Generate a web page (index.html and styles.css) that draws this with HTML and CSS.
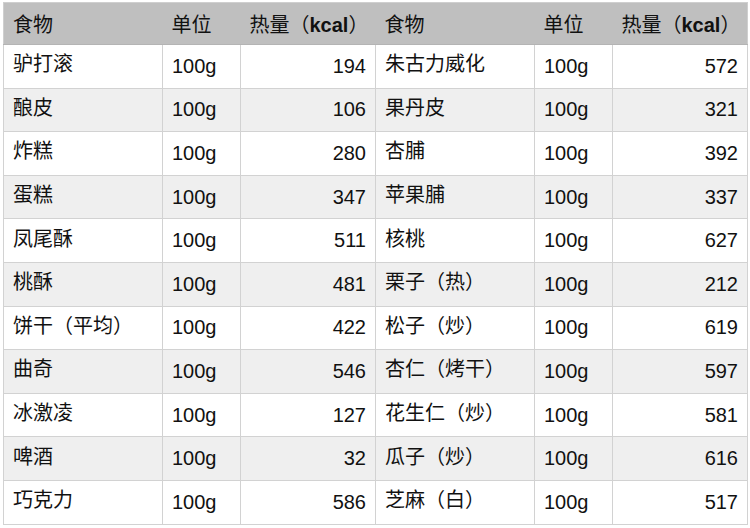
FILE: index.html
```html
<!DOCTYPE html>
<html lang="zh-CN">
<head>
<meta charset="utf-8">
<title>热量表</title>
<link rel="stylesheet" href="styles.css">
</head>
<body>
<table class="cal">
  <colgroup>
    <col class="c-food"><col class="c-unit"><col class="c-kcal">
    <col class="c-food"><col class="c-unit"><col class="c-kcal">
  </colgroup>
  <thead>
    <tr>
      <th>食物</th><th>单位</th><th>热量（<b>kcal</b>）</th>
      <th>食物</th><th>单位</th><th>热量（<b>kcal</b>）</th>
    </tr>
  </thead>
  <tbody>
    <tr><td class="food">驴打滚</td><td>100g</td><td class="num">194</td><td class="food">朱古力威化</td><td>100g</td><td class="num">572</td></tr>
    <tr><td class="food">酿皮</td><td>100g</td><td class="num">106</td><td class="food">果丹皮</td><td>100g</td><td class="num">321</td></tr>
    <tr><td class="food">炸糕</td><td>100g</td><td class="num">280</td><td class="food">杏脯</td><td>100g</td><td class="num">392</td></tr>
    <tr><td class="food">蛋糕</td><td>100g</td><td class="num">347</td><td class="food">苹果脯</td><td>100g</td><td class="num">337</td></tr>
    <tr><td class="food">凤尾酥</td><td>100g</td><td class="num">511</td><td class="food">核桃</td><td>100g</td><td class="num">627</td></tr>
    <tr><td class="food">桃酥</td><td>100g</td><td class="num">481</td><td class="food">栗子（热）</td><td>100g</td><td class="num">212</td></tr>
    <tr><td class="food">饼干（平均）</td><td>100g</td><td class="num">422</td><td class="food">松子（炒）</td><td>100g</td><td class="num">619</td></tr>
    <tr><td class="food">曲奇</td><td>100g</td><td class="num">546</td><td class="food">杏仁（烤干）</td><td>100g</td><td class="num">597</td></tr>
    <tr><td class="food">冰激凌</td><td>100g</td><td class="num">127</td><td class="food">花生仁（炒）</td><td>100g</td><td class="num">581</td></tr>
    <tr><td class="food">啤酒</td><td>100g</td><td class="num">32</td><td class="food">瓜子（炒）</td><td>100g</td><td class="num">616</td></tr>
    <tr><td class="food">巧克力</td><td>100g</td><td class="num">586</td><td class="food">芝麻（白）</td><td>100g</td><td class="num">517</td></tr>
  </tbody>
</table>
</body>
</html>
```

FILE: styles.css
```css
html, body {
  margin: 0;
  padding: 0;
  background: #ffffff;
}

body {
  padding: 2px 3px 0 3px;
  font-family: "Liberation Sans", "Noto Sans CJK SC", sans-serif;
  font-size: 20px;
  color: #111111;
}

.cal {
  width: 745px;
  table-layout: fixed;
  border-collapse: collapse;
  border: 1px solid #cfcfcf;
}

.c-food { width: 159px; }
.c-unit { width: 78px; }
.c-kcal { width: 135px; }

.cal th {
  height: 41px;
  padding: 0 0 0 9px;
  background: #bfbfbf;
  text-align: left;
  font-weight: normal;
  vertical-align: middle;
  border-bottom: 1px solid #b4b4b4;
  white-space: nowrap;
}

.cal th b {
  font-weight: bold;
}

.cal tbody tr {
  height: 43.6px;
}

.cal tbody tr:nth-child(even) {
  background: #efefef;
}

.cal td {
  padding: 0 9px;
  border: 1px solid #d2d2d2;
  vertical-align: middle;
  white-space: nowrap;
}

.cal td.food {
  padding-bottom: 7px;
}

.cal td.num {
  text-align: right;
}
```
